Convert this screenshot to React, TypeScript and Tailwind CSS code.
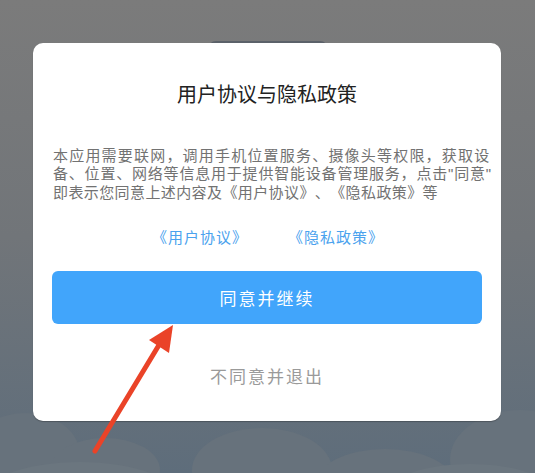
export default function App() {
  return (
    <div
      className="relative h-[473px] w-[535px] overflow-hidden bg-gradient-to-b from-[#7b7b7b] via-[#717579] to-[#5e6d7b] [text-spacing-trim:space-all]"
      style={{ fontFamily: '"Noto Sans CJK SC", "Noto Sans", sans-serif' }}
    >
      {/* background clouds */}
      <svg className="absolute inset-0" width="535" height="473" viewBox="0 0 535 473">
        <rect x="208" y="41" width="120" height="20" rx="8" fill="#5b6169" />
        <g fill="#67727c">
          <ellipse cx="25" cy="455" rx="55" ry="42" />
          <ellipse cx="105" cy="470" rx="55" ry="32" />
          <ellipse cx="262" cy="470" rx="70" ry="42" />
          <ellipse cx="385" cy="485" rx="70" ry="36" />
          <ellipse cx="520" cy="460" rx="70" ry="50" />
        </g>
        <g fill="#6b767f">
          <ellipse cx="80" cy="500" rx="100" ry="38" />
          <ellipse cx="470" cy="500" rx="90" ry="36" />
        </g>
      </svg>

      <div className="relative ml-[33px] mt-[43px] flex h-[378px] w-[468px] flex-col items-center rounded-[10px] bg-white px-[19px] pt-[37px] shadow-[0_1px_1px_rgba(0,0,0,0.25)]">
        <h1 className="text-[20px] leading-[28px] text-[#222]">用户协议与隐私政策</h1>

        <div className="mt-[38px] w-full pl-[1px] text-[15px] leading-[18px] text-[#727272]">
          <p className="whitespace-nowrap tracking-[1.2px]">本应用需要联网，调用手机位置服务、摄像头等权限，获取设</p>
          <p className="whitespace-nowrap tracking-[0.8px]">
            备、位置、网络等信息用于提供智能设备管理服务，点击<span className="font-['Liberation_Sans']">"</span>同意<span className="font-['Liberation_Sans']">"</span>
          </p>
          <p className="whitespace-nowrap tracking-[0.4px]">即表示您同意上述内容及《用户协议》、《隐私政策》等</p>
        </div>

        <div className="mt-[26px] flex gap-[40px] pl-[2px] text-[15px] leading-[20px] tracking-[1px] text-[#4aa2ee]">
          <span>《用户协议》</span>
          <span>《隐私政策》</span>
        </div>

        <button className="mt-[24px] h-[53px] w-full rounded-[6px] bg-[#41a5fb] text-[17px] tracking-[2px] text-white">
          同意并继续
        </button>

        <div className="mt-[40px] text-[17px] leading-[24px] tracking-[2px] text-[#9a9a9a]">不同意并退出</div>
      </div>

      {/* red arrow */}
      <svg className="absolute inset-0" width="535" height="473" viewBox="0 0 535 473">
        <line x1="95" y1="451" x2="162" y2="340" stroke="#ea4328" strokeWidth="5" strokeLinecap="round" />
        <polygon points="173,325 149,340 169,353" fill="#ea4328" />
      </svg>
    </div>
  );
}
